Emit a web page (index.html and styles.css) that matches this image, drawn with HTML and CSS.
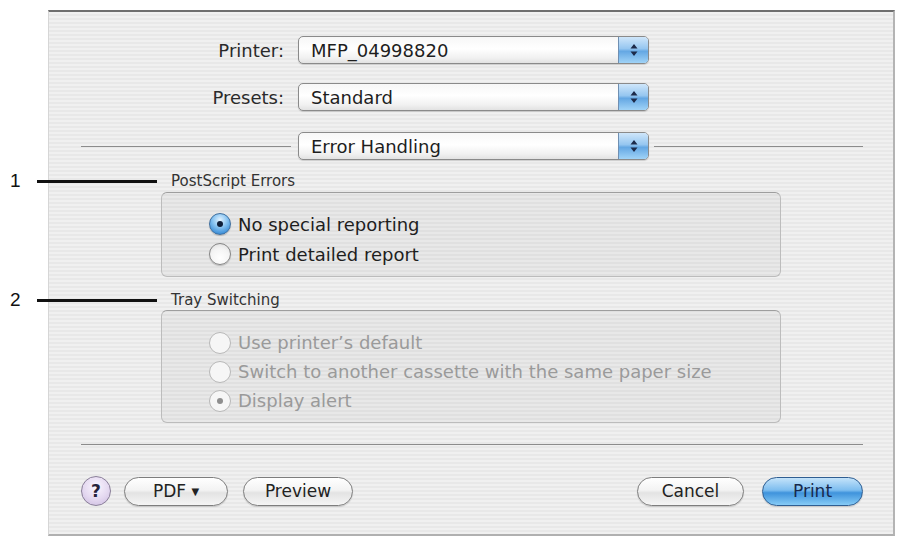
FILE: index.html
```html
<!DOCTYPE html>
<html>
<head>
    <meta charset="UTF-8">
    <title>Print</title>
    <link rel="stylesheet" href="styles.css">
</head>
<body>
    <div class="callout callout-1"><span class="callout-num">1</span><span class="callout-line"></span></div>
    <div class="callout callout-2"><span class="callout-num">2</span><span class="callout-line"></span></div>

    <div class="dialog">
        <div class="field-row">
            <label class="field-label">Printer:</label>
            <div class="popup">
                <span class="popup-text">MFP_04998820</span>
                <span class="stepper">
                    <svg width="10" height="16" viewBox="0 0 10 16"><path d="M5 2 L8.5 6.5 H1.5 Z M5 14 L8.5 9.5 H1.5 Z" fill="#1d2b4a"/></svg>
                </span>
            </div>
        </div>

        <div class="field-row presets-row">
            <label class="field-label">Presets:</label>
            <div class="popup">
                <span class="popup-text">Standard</span>
                <span class="stepper">
                    <svg width="10" height="16" viewBox="0 0 10 16"><path d="M5 2 L8.5 6.5 H1.5 Z M5 14 L8.5 9.5 H1.5 Z" fill="#1d2b4a"/></svg>
                </span>
            </div>
        </div>

        <div class="pane-row">
            <span class="rule rule-left"></span>
            <div class="popup">
                <span class="popup-text">Error Handling</span>
                <span class="stepper">
                    <svg width="10" height="16" viewBox="0 0 10 16"><path d="M5 2 L8.5 6.5 H1.5 Z M5 14 L8.5 9.5 H1.5 Z" fill="#1d2b4a"/></svg>
                </span>
            </div>
            <span class="rule rule-right"></span>
        </div>

        <div class="group-title first-title">PostScript Errors</div>
        <div class="group-box box-errors">
            <div class="radio-row">
                <span class="radio checked"></span>
                <span class="radio-label">No special reporting</span>
            </div>
            <div class="radio-row">
                <span class="radio"></span>
                <span class="radio-label">Print detailed report</span>
            </div>
        </div>

        <div class="group-title">Tray Switching</div>
        <div class="group-box box-tray disabled">
            <div class="radio-row">
                <span class="radio"></span>
                <span class="radio-label">Use printer’s default</span>
            </div>
            <div class="radio-row">
                <span class="radio"></span>
                <span class="radio-label">Switch to another cassette with the same paper size</span>
            </div>
            <div class="radio-row">
                <span class="radio checked"></span>
                <span class="radio-label">Display alert</span>
            </div>
        </div>

        <div class="bottom-rule"></div>

        <div class="button-bar">
            <button class="help-btn">?</button>
            <button class="push-btn pdf-btn">PDF <span class="pdf-arrow">▼</span></button>
            <button class="push-btn preview-btn">Preview</button>
            <span class="spacer"></span>
            <button class="push-btn cancel-btn">Cancel</button>
            <button class="push-btn print-btn">Print</button>
        </div>
    </div>
</body>
</html>
```

FILE: styles.css
```css
body {
    margin: 0;
    padding: 0;
    background-color: #ffffff;
    font-family: "DejaVu Sans", Verdana, sans-serif;
    width: 898px;
    height: 539px;
    position: relative;
    overflow: hidden;
}

.dialog {
    box-sizing: border-box;
    width: 847px;
    height: 526px;
    margin: 10px 0 0 48px;
    padding: 24px 30px 0 32px;
    border-top: 2px solid #6e6e6e;
    border-left: 1px solid #d6d6d6;
    border-right: 2px solid #b4b4b4;
    border-bottom: 2px solid #b0b0b0;
    background: repeating-linear-gradient(to bottom, #f0f0f0 0, #f0f0f0 2px, #e8e8e8 2px, #e8e8e8 4px);
    display: flex;
    flex-direction: column;
}

/* popup rows */
.field-row {
    display: flex;
    align-items: center;
    gap: 14px;
}

.presets-row {
    margin-top: 19px;
}

.field-label {
    width: 203px;
    text-align: right;
    font-size: 18px;
    color: #2a2a2a;
}

.popup {
    box-sizing: border-box;
    width: 351px;
    height: 28px;
    display: flex;
    align-items: center;
    border: 1px solid #8a8a8a;
    border-radius: 5px;
    background: linear-gradient(to bottom, #f7f7f7 0%, #ffffff 45%, #f1f1f1 80%, #e2e2e2 100%);
    box-shadow: 0 1px 1px rgba(0, 0, 0, 0.15);
    overflow: hidden;
}

.popup-text {
    flex: 1;
    padding-left: 12px;
    font-size: 18px;
    color: #1e1e1e;
    white-space: nowrap;
}

.stepper {
    width: 29px;
    height: 100%;
    display: flex;
    align-items: center;
    justify-content: center;
    border-left: 1px solid #6f8fb2;
    background: linear-gradient(to bottom, #cfe6fa 0%, #95c6f0 45%, #64a7e3 55%, #a0d3f7 100%);
}

.pane-row {
    display: flex;
    align-items: center;
    margin-top: 21px;
}

.rule {
    height: 1px;
    background-color: #8c8c8c;
}

.rule-left {
    width: 210px;
    margin-right: 7px;
}

.rule-right {
    flex: 1;
    margin-left: 5px;
}

/* groups */
.group-title {
    margin-left: 90px;
    margin-top: 14px;
    font-size: 15px;
    line-height: 18px;
    color: #333333;
}

.first-title {
    margin-top: 12px;
}

.group-box {
    box-sizing: border-box;
    width: 620px;
    margin-left: 80px;
    margin-top: 2px;
    padding-left: 47px;
    border: 1px solid #bcbcbc;
    border-top-color: #9e9e9e;
    border-radius: 6px;
    background-color: rgba(0, 0, 0, 0.03);
}

.box-errors {
    height: 85px;
    padding-top: 16px;
}

.box-tray {
    height: 113px;
    margin-top: 1px;
    padding-top: 17px;
}

.radio-row {
    display: flex;
    align-items: center;
    height: 30px;
    gap: 7px;
}

.box-tray .radio-row {
    height: 29px;
}

.radio-label {
    font-size: 18px;
    color: #1e1e1e;
    white-space: nowrap;
}

.radio {
    box-sizing: border-box;
    width: 22px;
    height: 22px;
    border-radius: 50%;
    border: 1.5px solid #858585;
    background: radial-gradient(circle at 50% 70%, #ffffff 0%, #f4f4f4 55%, #d8d8d8 100%);
    box-shadow: 0 1px 1px rgba(0, 0, 0, 0.2);
    display: flex;
    align-items: center;
    justify-content: center;
}

.radio.checked {
    border-color: #3f6f9f;
    background: radial-gradient(circle at 50% 30%, #e4f3ff 0%, #8cc6f2 40%, #3d8fd8 80%, #2c6fb5 100%);
}

.radio.checked::after {
    content: '';
    width: 6px;
    height: 6px;
    border-radius: 50%;
    background-color: #0f1f3a;
}

.disabled .radio {
    border-color: #b8b8b8;
    background: #f6f6f6;
    box-shadow: none;
}

.disabled .radio.checked::after {
    background-color: #8e8e8e;
}

.disabled .radio-label {
    color: #9a9a9a;
}

.bottom-rule {
    height: 1px;
    margin-top: 21px;
    background-color: #8c8c8c;
}

/* buttons */
.button-bar {
    display: flex;
    align-items: center;
    margin-top: 31px;
}

.spacer {
    flex: 1;
}

.help-btn {
    box-sizing: border-box;
    width: 30px;
    height: 30px;
    padding: 0;
    border-radius: 50%;
    border: 1px solid #8a7f99;
    background: radial-gradient(circle at 50% 35%, #faf6ff 0%, #e4d8f0 55%, #c9b8dd 100%);
    font-family: "DejaVu Sans", sans-serif;
    font-size: 17px;
    font-weight: bold;
    color: #26223a;
    margin-right: 13px;
}

.push-btn {
    box-sizing: border-box;
    height: 29px;
    padding: 0;
    border: 1px solid #7e7e7e;
    border-radius: 15px;
    background: linear-gradient(to bottom, #ffffff 0%, #f3f3f3 45%, #e3e3e3 55%, #f5f5f5 100%);
    box-shadow: 0 1px 1px rgba(0, 0, 0, 0.15);
    font-family: "DejaVu Sans", sans-serif;
    font-size: 17px;
    color: #222222;
}

.pdf-btn {
    width: 104px;
}

.pdf-arrow {
    font-size: 10px;
    vertical-align: 2px;
}

.preview-btn {
    width: 110px;
    margin-left: 15px;
}

.cancel-btn {
    width: 107px;
}

.print-btn {
    width: 101px;
    margin-left: 18px;
    border-color: #2f5e92;
    background: linear-gradient(to bottom, #c4e3fa 0%, #7dbdef 45%, #3f93dc 55%, #86cbf6 100%);
    color: #17284c;
}

/* callouts */
.callout {
    position: absolute;
    left: 10px;
    display: flex;
    align-items: center;
    height: 20px;
}

.callout-1 {
    top: 171px;
}

.callout-2 {
    top: 290px;
}

.callout-num {
    width: 27px;
    font-family: "Liberation Sans", Arial, sans-serif;
    font-size: 19px;
    color: #111111;
}

.callout-line {
    width: 120px;
    height: 3px;
    background-color: #111111;
}
```
